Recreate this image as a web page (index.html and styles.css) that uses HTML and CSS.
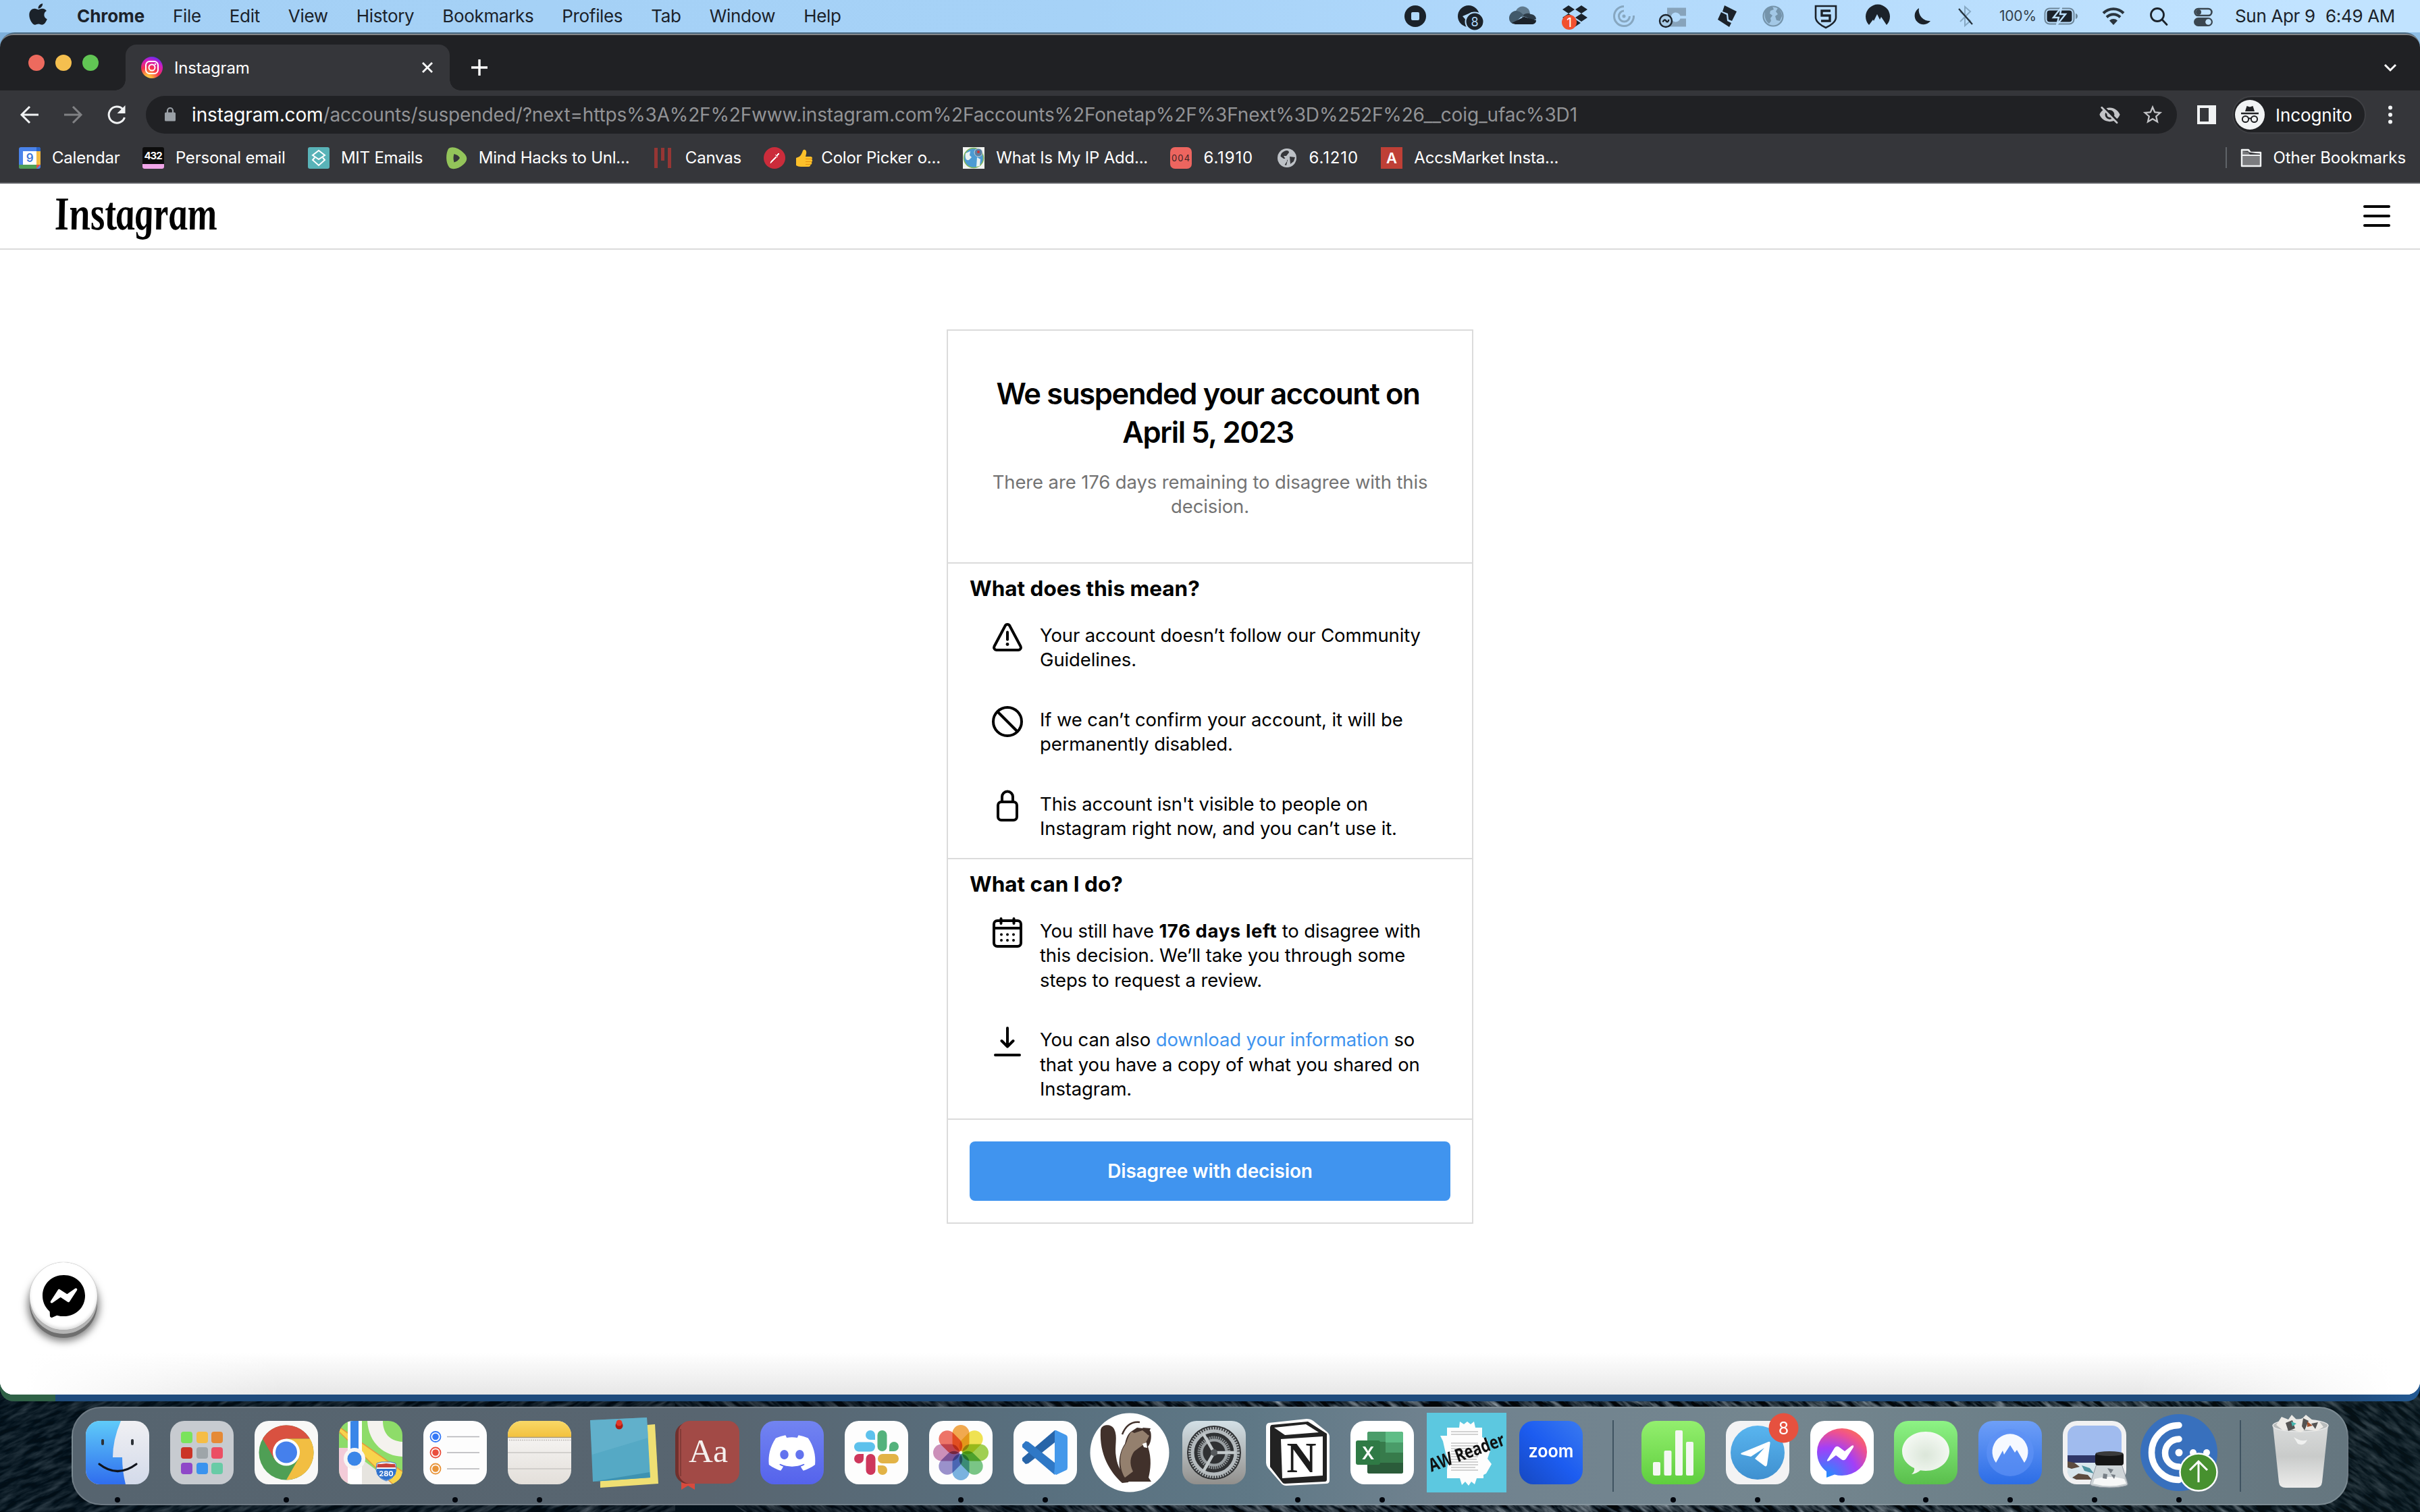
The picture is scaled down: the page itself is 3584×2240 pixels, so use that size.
FILE: index.html
```html
<!DOCTYPE html>
<html lang="en">
<head>
<meta charset="utf-8">
<title>Instagram</title>
<link rel="stylesheet" href="styles.css">
</head>
<body>
<div class="desktop">

  <svg class="wallpaper" width="3584" height="190" viewBox="0 0 3584 190" aria-hidden="true">
    <defs>
      <filter id="waves" x="0" y="0" width="100%" height="100%" color-interpolation-filters="sRGB">
        <feTurbulence type="fractalNoise" baseFrequency="0.03 0.14" numOctaves="4" seed="7"/>
        <feColorMatrix values="1.5 0.6 0 0 -0.88  1.5 0.6 0 0 -0.83  1.5 0.6 0 0 -0.79  0 0 0 0 1"/>
      </filter>
      <linearGradient id="shade"><stop offset="0" stop-color="#03131d" stop-opacity=".78"/><stop offset=".35" stop-color="#020c15" stop-opacity=".66"/><stop offset=".6" stop-color="#0a141c" stop-opacity=".3"/><stop offset=".88" stop-color="#0a181d" stop-opacity=".4"/><stop offset="1" stop-color="#07171e" stop-opacity=".8"/></linearGradient>
      <clipPath id="lh"><rect width="1000" height="190"/></clipPath><clipPath id="rh"><rect x="1000" width="2584" height="190"/></clipPath>
    </defs>
    <g clip-path="url(#lh)"><rect x="-300" y="-100" width="1500" height="900" transform="rotate(-24)" filter="url(#waves)"/></g>
    <g clip-path="url(#rh)"><rect x="900" y="-2200" width="2900" height="2300" transform="rotate(34 1000 0)" filter="url(#waves)"/></g>
    <rect width="3584" height="190" fill="url(#shade)"/>
  </svg>

  <header class="menubar">
    <nav class="menus">
      <svg class="apple" width="27" height="32" viewBox="0 30 384 452"><path fill="#1b222a" d="M318.7 268.7c-.2-36.7 16.4-64.4 50-84.8-18.8-26.9-47.2-41.7-84.7-44.6-35.5-2.8-74.3 20.7-88.5 20.7-15 0-49.4-19.7-76.4-19.7C63.3 141.2 4 184.8 4 273.5q0 39.3 14.4 81.2c12.8 36.7 59 126.7 107.2 125.2 25.2-.6 43-17.9 75.8-17.9 31.8 0 48.3 17.9 76.4 17.9 48.6-.7 90.4-82.5 102.6-119.3-65.2-30.7-61.7-90-61.7-91.9zm-56.6-164.2c27.3-32.4 24.8-61.9 24-72.5-24.1 1.4-52 16.4-67.9 34.9-17.5 19.8-27.8 44.3-25.6 71.9 26.1 2 49.9-11.4 69.5-34.3z"/></svg>
      <b>Chrome</b><span>File</span><span>Edit</span><span>View</span><span>History</span><span>Bookmarks</span><span>Profiles</span><span>Tab</span><span>Window</span><span>Help</span>
    </nav>
    <div class="status">
      <svg width="36" height="40" viewBox="0 0 36 40"><circle cx="18" cy="20" r="16" fill="#1b222a"/><rect x="12" y="14" width="12" height="12" rx="2" fill="#b2dafb"/></svg>
      <svg width="42" height="40" viewBox="0 0 42 40"><circle cx="16" cy="20" r="16" fill="#1b222a"/><path d="M7 20l14-6 3 1-10 6 1 8" fill="#b2dafb"/><circle cx="25" cy="28" r="13.500" fill="#1b222a" stroke="#b2dafb" stroke-width="2"/><text x="25" y="34.500" text-anchor="middle" font-size="18" fill="#b2dafb">8</text></svg>
      <svg width="40" height="40" viewBox="0 0 40 40"><path d="M10 12a11 11 0 0 1 21 4l-10 8z" fill="#60798c"/><path d="M8 31.500a8 8 0 0 1-8-8.500c0-6 5-11 10-11 4 0 8 2 11 6l-14 13z" fill="#42596a"/><path d="M20 19c4-4 9-4 12-2 5 0 8 4 8 7.500l-6 1z" fill="#2d3b47"/><path d="M4 30l18-9 18 5c0 4-3 6-7 6H9z" fill="#1b222a"/></svg>
      <svg width="40" height="40" viewBox="0 0 40 40"><path d="M10 4l9 6-9 6-9-6zM29 4l9 6-9 6-9-6zM10 16l9 6-9 6-9-6zM29 16l9 6-9 6-9-6zM19 24l9 6-9 6-9-6z" fill="#1b222a"/><circle cx="11" cy="29" r="11" fill="#f1502f"/><text x="11" y="36" text-anchor="middle" font-size="19" fill="#fff">1</text></svg>
      <svg width="36" height="40" viewBox="0 0 36 40"><g fill="none" stroke="#87a7c0" stroke-width="3"><path d="M18 5.500A14.500 14.500 0 1 0 32.500 19"/><path d="M18 12a8 8 0 1 0 8.500 8"/></g><circle cx="18" cy="20" r="2.500" fill="#87a7c0"/></svg>
      <svg width="44" height="40" viewBox="0 0 44 40"><path d="M10 7.500h28v12h-8.500a7 7 0 1 0 0 4H38v12H10z" fill="#87a3bb"/><circle cx="8" cy="27" r="9" fill="#a9cce8" stroke="#1b222a" stroke-width="2.400"/><path d="M3.500 28.500q2.500-5 5-1.500t4-2" fill="none" stroke="#1b222a" stroke-width="2.400"/></svg>
      <svg width="36" height="40" viewBox="0 0 36 40"><path d="M13 4l18 9-7 14-5-2-1-9-8-3z" fill="#1b222a"/><path d="M8 14l8 4 1 9 6 3-3 6L3 25z" fill="#1b222a"/></svg>
      <svg width="36" height="40" viewBox="0 0 36 40"><circle cx="18" cy="20" r="14.500" fill="#a3c8e6" stroke="#7594ab" stroke-width="2.200"/><path d="M7 10c3-3 6-5 10-4l2 4-5 2-1 4 4 3-3 4 1 4-3 4c-6-4-8-13-5-21zM25 8c4 3 6 8 6 12l-3 7-5-1-2-6 4-3-3-4z" fill="#7594ab"/></svg>
      <svg width="36" height="40" viewBox="0 0 36 40" fill="none" stroke="#1b222a" stroke-width="2.600"><path d="M3 5h30v17c0 6-8 12-15 15-7-3-15-9-15-15z"/><path d="M25 12H12v7h12v8H11" stroke-width="3.400"/></svg>
      <svg width="38" height="40" viewBox="0 0 38 40"><path d="M6 33A18 18 0 1 1 32 33L24 21l-2 4-4-8-5 10-1-2z" fill="#1b222a"/></svg>
      <svg width="34" height="40" viewBox="0 0 34 40"><path d="M13 8a13 13 0 1 0 17 19A16 16 0 0 1 13 8z" fill="#1b222a"/></svg>
      <svg width="30" height="40" viewBox="0 0 30 40" fill="none" stroke-width="2"><path d="M8 13l15 14-8 7V6l8 7L8 28" stroke="#87a9c4"/><path d="M6 9l20 23" stroke="#24303a" stroke-width="2.200"/></svg>
      <span class="pct">100%</span>
      <svg width="52" height="40" viewBox="0 0 52 40"><rect x="1.500" y="8.500" width="43" height="23" rx="7" fill="none" stroke="#6d8699" stroke-width="2"/><path d="M47 16c4 1 4 7 0 8z" fill="#6d8699"/><rect x="4.500" y="11.500" width="37" height="17" rx="4" fill="#1b222a"/><path d="M26 7L14 22h8l-3 11 13-16h-8z" fill="#1b222a" stroke="#bde0fd" stroke-width="2.400"/></svg>
      <svg width="36" height="40" viewBox="0 0 36 40" fill="none" stroke="#2a343d" stroke-width="4"><path d="M3 15.500a21 21 0 0 1 30 0M8 21.500a14 14 0 0 1 20 0"/><path d="M18 33l-6-6.500a8.500 8.500 0 0 1 12 0z" fill="#2a343d" stroke="none"/></svg>
      <svg width="36" height="40" viewBox="0 0 36 40" fill="none" stroke="#1b222a" stroke-width="2.800" stroke-linecap="round"><circle cx="16" cy="18" r="9.500"/><path d="M23 25l7 7.500"/></svg>
      <svg width="36" height="40" viewBox="0 0 36 40"><rect x="5.500" y="9" width="25" height="10" rx="5" fill="none" stroke="#3a4650" stroke-width="2.600"/><circle cx="11" cy="14" r="4" fill="#3a4650"/><rect x="4" y="22" width="28" height="13" rx="6.500" fill="#3a4650"/><circle cx="25.500" cy="28.500" r="4.300" fill="#c2e3fe"/></svg>
      <span>Sun Apr 9</span><span>6:49 AM</span>
    </div>
  </header>

  <main class="window">
    <div class="tabstrip">
      <div class="lights"><i class="red"></i><i class="yellow"></i><i class="green"></i></div>
      <div class="tab">
        <svg width="32" height="32" viewBox="0 0 32 32"><defs><radialGradient id="ig" cx=".3" cy="1.050" r="1.100"><stop offset="0" stop-color="#fd5"/><stop offset=".2" stop-color="#fdb03c"/><stop offset=".5" stop-color="#f5314e"/><stop offset=".8" stop-color="#d31cc0"/><stop offset="1" stop-color="#5b2ff2"/></radialGradient></defs><circle cx="16" cy="16" r="16" fill="url(#ig)"/><g fill="none" stroke="#fff" stroke-width="2"><rect x="7" y="7" width="18" height="18" rx="5.500"/><circle cx="16" cy="16" r="4.500"/></g><circle cx="21" cy="11" r="1.300" fill="#fff"/></svg>
        <span>Instagram</span>
        <svg width="18" height="18" viewBox="0 0 18 18"><path d="M2 2l14 14M16 2L2 16" stroke="#fff" stroke-width="2.800"/></svg>
      </div>
      <svg class="plus" width="26" height="26" viewBox="0 0 26 26"><path d="M13 1v24M1 13h24" stroke="#fff" stroke-width="3.400"/></svg>
      <svg class="chev" width="20" height="14" viewBox="0 0 20 14"><path d="M2 2l8 8 8-8" fill="none" stroke="#fff" stroke-width="3"/></svg>
    </div>

    <div class="toolbar">
      <svg width="28" height="28" viewBox="0 0 28 28" fill="none" stroke="#f1f3f4" stroke-width="3"><path d="M14 2L2 14l12 12M2.500 14H27"/></svg>
      <svg width="28" height="28" viewBox="0 0 28 28" fill="none" stroke="#808184" stroke-width="3"><path d="M14 2l12 12-12 12M25.500 14H1"/></svg>
      <svg width="30" height="30" viewBox="0 0 30 30"><path d="M24 7a12 12 0 1 0 2.500 12" fill="none" stroke="#f1f3f4" stroke-width="3"/><path d="M27.500 1v12H15.500z" fill="#f1f3f4"/></svg>
      <div class="omnibox">
        <svg width="18" height="24" viewBox="0 0 18 24"><rect x="1" y="8.500" width="16" height="13" rx="1.500" fill="#9aa0a6"/><path d="M5 9V6a4 4 0 0 1 8 0v3" fill="none" stroke="#9aa0a6" stroke-width="2.200"/></svg>
        <p class="url"><b>instagram.com</b>/accounts/suspended/?next=https%3A%2F%2Fwww.instagram.com%2Faccounts%2Fonetap%2F%3Fnext%3D%252F%26__coig_ufac%3D1</p>
        <svg width="33" height="33" viewBox="0 0 24 24" fill="#c3c4c7"><path d="M12 6.500c2.760 0 5 2.240 5 5 0 .51-.1 1-.24 1.460l3.060 3.060c1.390-1.230 2.490-2.770 3.180-4.530C21.270 7.110 17 4 12 4c-1.270 0-2.490.2-3.640.57l2.170 2.170c.47-.14.96-.24 1.470-.24zM2.710 3.160c-.39.39-.39 1.020 0 1.410l1.970 1.970C3.060 7.830 1.770 9.530 1 11.500 2.730 15.890 7 19 12 19c1.520 0 2.970-.3 4.310-.82l2.720 2.720c.39.39 1.020.39 1.410 0 .39-.39.39-1.020 0-1.410L4.130 3.160c-.39-.39-1.030-.39-1.420 0zM12 16.500c-2.760 0-5-2.240-5-5 0-.77.18-1.500.49-2.140l1.570 1.570c-.03.18-.06.37-.06.570 0 1.660 1.340 3 3 3 .2 0 .38-.03.57-.07L14.140 16c-.65.32-1.370.5-2.140.5z"/></svg>
        <svg width="34" height="34" viewBox="0 0 24 24" fill="#c3c4c7"><path d="M22 9.240l-7.190-.62L12 2 9.190 8.630 2 9.240l5.460 4.730L5.820 21 12 17.270 18.180 21l-1.630-7.030L22 9.240zM12 15.400l-3.760 2.270 1-4.280-3.320-2.880 4.380-.38L12 6.100l1.710 4.040 4.380.38-3.320 2.880 1 4.280L12 15.400z"/></svg>
      </div>
      <svg class="panel" width="28" height="28" viewBox="0 0 28 28"><path fill-rule="evenodd" d="M0 0h28v28H0zM4 4v20h13V4z" fill="#f1f3f4"/></svg>
      <div class="incognito">
        <svg width="44" height="44" viewBox="0 0 44 44"><circle cx="22" cy="22" r="22" fill="#f1f3f4"/><path d="M15 17l2.500-8 4.500 1.500L26.500 9l2.500 8z" fill="#202124"/><path d="M9 20h26" stroke="#202124" stroke-width="2.600"/><g fill="none" stroke="#202124" stroke-width="2"><circle cx="15.500" cy="28.500" r="4.600"/><circle cx="28.500" cy="28.500" r="4.600"/><path d="M20 28q2-1.500 4 0"/></g></svg>
        <span>Incognito</span>
      </div>
      <svg class="dots" width="8" height="28" viewBox="0 0 8 28" fill="#f1f3f4"><circle cx="4" cy="3.500" r="3"/><circle cx="4" cy="14" r="3"/><circle cx="4" cy="24.500" r="3"/></svg>
    </div>

    <div class="bookmarks">
      <a><svg width="32" height="32" viewBox="0 0 32 32"><rect width="32" height="32" rx="3" fill="#4a83ea"/><path d="M26 0h3a3 3 0 0 1 3 3v3h-6z" fill="#2a63c4"/><path d="M26 6h6v20h-6z" fill="#f3bb42"/><path d="M0 26h26v6H3a3 3 0 0 1-3-3z" fill="#4f9f55"/><path d="M26 26h6l-6 6z" fill="#dd5144"/><path d="M6 6h20v20H6z" fill="#fff"/><text x="16" y="22" text-anchor="middle" font-size="17" font-weight="600" fill="#3f76d8">9</text></svg>Calendar</a>
      <a><svg width="32" height="32" viewBox="0 0 32 32"><rect width="32" height="32" rx="3" fill="#0c0c0c"/><path d="M0 25h32v4a3 3 0 0 1-3 3H3a3 3 0 0 1-3-3z" fill="#f0a5e8"/><text x="16" y="18" text-anchor="middle" font-size="15" font-weight="700" fill="#fff" textLength="27">432</text></svg>Personal email</a>
      <a><svg width="32" height="32" viewBox="0 0 32 32"><rect width="32" height="32" rx="3" fill="#59b3b8"/><path d="M16 5l9 7-9 6-9-6zM10 15.500L7 19l9 8 9-8-3-3.500" fill="none" stroke="#fff" stroke-width="2"/></svg>MIT Emails</a>
      <a><svg width="32" height="32" viewBox="0 0 32 32"><path d="M4 2.500C9-2 19 1 26 8c7 6 7 12 0 18C18 33 9 34 5 29.500 0 22 0 10 4 2.500z" fill="#93c45a"/><path d="M12.500 10q7 2 8.500 6-3 5-8.500 6.500-2-6.500 0-12.500z" fill="#35363a"/></svg>Mind Hacks to Unl...</a>
      <a><svg width="32" height="32" viewBox="0 0 32 32" fill="#963634"><path d="M3 1h5v30H3zM13 1h5v19h-5zM23 1h5v30h-5z"/></svg>Canvas</a>
      <a><svg width="32" height="32" viewBox="0 0 32 32"><circle cx="16" cy="16" r="16" fill="#cb2c3b"/><path d="M10 24l1-3 7-7 1 1-7 7zM17 11l4 4M19 12l3-3 1 1-3 3z" fill="#fff" stroke="#fff" stroke-width="1"/></svg><svg class="thumb" width="26" height="28" viewBox="0 0 26 28"><path d="M1 14c1-1 4-1 6-3 3-3 3-7 5-9 3-1 5 2 4 6l-1 4h8c3 1 2 4 1 4 2 1 1 4 0 4 1 2 0 4-2 4 1 2-1 3-3 3H8c-3 0-5-1-7-2z" fill="#fcc02a"/><path d="M15 15.500h9M15 19.500h9M15 23.500h7" stroke="#e58f12" stroke-width="1.200"/></svg>Color Picker o...</a>
      <a><svg width="32" height="32" viewBox="0 0 32 32"><path d="M0 0h32v32H0z" fill="#f2f4f1"/><circle cx="16" cy="16" r="14.500" fill="#4c9bd2" stroke="#7fb356" stroke-width="1.500"/><path d="M4 9l7-3-1 6 3 3-4 4c-5 2-6-5-5-10zM21 15l5 3-1 10-5 1z" fill="#e9f2f2"/><circle cx="23" cy="8" r="6" fill="#5a7fa0" stroke="#c8d4dc"/><circle cx="23" cy="7" r="2" fill="#c33"/></svg>What Is My IP Add...</a>
      <a class="num"><svg width="32" height="32" viewBox="0 0 32 32"><rect width="32" height="32" rx="7" fill="#ed655f"/><text x="16" y="20.500" text-anchor="middle" font-size="13" fill="#3a2324" textLength="28">004</text></svg>6.1910</a>
      <a class="num"><svg width="32" height="32" viewBox="0 0 32 32"><circle cx="16" cy="16" r="14" fill="#bdc1c6"/><path d="M8 9c5-5 11-5 11-1l-4 5h-4l3 5 3 1-2 8C7 25 4 16 8 9zM20 14l8 1-2 6-5 4z" fill="#35363a"/><path d="M4 12l7 5h5v4l-4 6C5 24 3 17 4 12z" fill="#bdc1c6"/></svg>6.1210</a>
      <a><svg width="32" height="32" viewBox="0 0 32 32"><path d="M0 0h32v32H0z" fill="#bf4036"/><text x="16" y="24" text-anchor="middle" font-size="22" font-weight="600" fill="#fff">A</text></svg>AccsMarket Insta...</a>
      <a class="other"><svg width="32" height="28" viewBox="0 0 32 28"><path d="M2 26V2h10l3 4h15v20z" fill="#7b7c7f" stroke="#f1f3f4" stroke-width="2.400" stroke-linejoin="round"/><path d="M3 4h8l3 5h15v-1z" fill="#35363a"/><path d="M2 10h28" stroke="#f1f3f4" stroke-width="2"/></svg>Other Bookmarks</a>
    </div>

    <div class="page">
      <header class="site">
        <svg class="wordmark" width="250" height="76" viewBox="0 0 250 76"><text x="-3" y="56" transform="skewX(7)" textLength="241" lengthAdjust="spacingAndGlyphs">Instagram</text></svg>
        <svg width="40" height="32" viewBox="0 0 40 32" stroke="#000" stroke-width="4" stroke-linecap="round"><path d="M2 2h36M2 16h36M2 30h36"/></svg>
      </header>

      <article class="card">
        <section class="intro">
          <h1>We suspended your account on<br>April 5, 2023</h1>
          <p>There are 176 days remaining to disagree with this<br>decision.</p>
        </section>
        <section class="meaning">
          <h2>What does this mean?</h2>
          <div class="item"><svg width="48" height="48" viewBox="0 0 48 48"><path d="M21 6.500a3.700 3.700 0 0 1 6 0L43.600 37.800a3.700 3.700 0 0 1-3.300 5.200H7.700a3.700 3.700 0 0 1-3.300-5.200z" fill="none" stroke="#000" stroke-width="4" stroke-linejoin="round"/><path d="M24 16.500v11" stroke="#000" stroke-width="4" stroke-linecap="round"/><circle cx="24" cy="34.500" r="2.400"/></svg><p>Your account doesn’t follow our Community<br>Guidelines.</p></div>
          <div class="item"><svg width="48" height="48" viewBox="0 0 48 48" fill="none" stroke="#000" stroke-width="4"><circle cx="24" cy="24" r="21"/><path d="M9.500 9.500l29 29"/></svg><p>If we can’t confirm your account, it will be<br>permanently disabled.</p></div>
          <div class="item"><svg width="48" height="48" viewBox="0 0 48 48" fill="none" stroke="#000" stroke-width="4"><rect x="10" y="18" width="28" height="27" rx="5"/><path d="M16 18v-7.500a8 8 0 0 1 16 0V18"/></svg><p>This account isn't visible to people on<br>Instagram right now, and you can’t use it.</p></div>
        </section>
        <section class="actions">
          <h2>What can I do?</h2>
          <div class="item"><svg width="48" height="48" viewBox="0 0 48 48" fill="none" stroke="#000" stroke-width="4"><rect x="4" y="6" width="40" height="38" rx="5"/><path d="M4 17h40"/><path d="M14.500 3v7M33.500 3v7" stroke-linecap="round"/><path d="M15 26.500h.01M24 26.500h.01M33 26.500h.01M15 35h.01M24 35h.01M33 35h.01" stroke-linecap="round"/></svg><p>You still have <b>176 days left</b> to disagree with<br>this decision. We’ll take you through some<br>steps to request a review.</p></div>
          <div class="item"><svg width="48" height="48" viewBox="0 0 48 48" fill="none" stroke="#000" stroke-width="4" stroke-linecap="round" stroke-linejoin="round"><path d="M24 4v27M15.500 23l8.500 8.500 8.500-8.500M6 44h36"/></svg><p>You can also <a>download your information</a> so<br>that you have a copy of what you shared on<br>Instagram.</p></div>
        </section>
        <section class="foot"><button>Disagree with decision</button></section>
      </article>

      <div class="chat"><svg width="63" height="63" viewBox="0 0 24 24"><path d="M12 0C5.240 0 0 4.952 0 11.640c0 3.499 1.434 6.521 3.769 8.610a.96.96 0 0 1 .323.683l.065 2.135a.96.96 0 0 0 1.347.85l2.381-1.053a.96.96 0 0 1 .641-.046A13 13 0 0 0 12 23.280c6.760 0 12-4.952 12-11.640S18.760 0 12 0m6.806 7.440c.522-.03.971.567.63 1.094l-4.178 6.457a.707.707 0 0 1-.977.208l-3.870-2.504a.44.44 0 0 0-.49.007l-4.363 3.010c-.637.438-1.415-.317-.995-.966l4.179-6.457a.706.706 0 0 1 .977-.21l3.870 2.505c.15.097.344.094.491-.007l4.362-3.008a.7.7 0 0 1 .364-.13"/></svg></div>
      <div class="dockshade"></div>
    </div>
  </main>
  <div class="behind"></div>

  <footer class="dock">
    <svg class="defs" width="0" height="0"><defs>
      <linearGradient id="gFind" x2="0" y2="1"><stop stop-color="#5fcbf9"/><stop offset="1" stop-color="#2f6dee"/></linearGradient>
      <linearGradient id="gFace" x2="0" y2="1"><stop stop-color="#f0f0f3"/><stop offset="1" stop-color="#d3daea"/></linearGradient>
      <linearGradient id="gDisc" x2="0" y2="1"><stop stop-color="#7284f1"/><stop offset="1" stop-color="#5563ec"/></linearGradient>
      <linearGradient id="gGreen" x2="0" y2="1"><stop stop-color="#8df385"/><stop offset="1" stop-color="#5abf4c"/></linearGradient>
      <linearGradient id="gNum" x2="0" y2="1"><stop stop-color="#93ef6e"/><stop offset="1" stop-color="#5fce3e"/></linearGradient>
      <linearGradient id="gTele" x2="0" y2="1"><stop stop-color="#59b5ef"/><stop offset="1" stop-color="#3f90d0"/></linearGradient>
      <linearGradient id="gNord" x2="0" y2="1"><stop stop-color="#6e9ff8"/><stop offset="1" stop-color="#2c6de6"/></linearGradient>
      <linearGradient id="gZoom" x1="1" y1="0" x2="0" y2="1"><stop stop-color="#3a7af0"/><stop offset=".5" stop-color="#1c5cf0"/><stop offset="1" stop-color="#1648c0"/></linearGradient>
      <linearGradient id="gNote" x2="0" y2="1"><stop stop-color="#f8d867"/><stop offset="1" stop-color="#f3c13e"/></linearGradient>
      <linearGradient id="gPaper" x2="0" y2="1"><stop stop-color="#fbfaf9"/><stop offset="1" stop-color="#e3dfda"/></linearGradient>
      <linearGradient id="gSet" x2="0" y2="1"><stop stop-color="#d3e0e6"/><stop offset="1" stop-color="#918f8c"/></linearGradient>
      <radialGradient id="gMsgr" cx=".2" cy="1" r="1.100"><stop stop-color="#1e90ff"/><stop offset=".55" stop-color="#a23ff8"/><stop offset=".85" stop-color="#ee5190"/><stop offset="1" stop-color="#fa6a60"/></radialGradient>
      <radialGradient id="gBub" cx=".5" cy=".55" r=".6"><stop stop-color="#dbe6d9"/><stop offset="1" stop-color="#f7fbf6"/></radialGradient>
      <linearGradient id="gTrash" x2="0" y2="1"><stop stop-color="#d9dbdb"/><stop offset=".5" stop-color="#c9cbca"/><stop offset="1" stop-color="#ececeb"/></linearGradient>
      <clipPath id="sq"><rect width="94" height="94" rx="21"/></clipPath>
    </defs></svg>

    <div class="app on"><svg viewBox="0 0 94 94"><g clip-path="url(#sq)"><path d="M0 0h94v94H0z" fill="url(#gFace)"/><path d="M0 0h52Q40 28 40 54h14q0 20 5 40H0z" fill="url(#gFind)"/></g><g stroke="#2c3137" stroke-width="4" stroke-linecap="round" fill="none"><path d="M25 29v5M69 29v5"/><path d="M20 64q27 21 55 0" stroke="#10141c" stroke-width="3.200"/></g></svg></div>
    <div class="app"><svg viewBox="0 0 94 94"><rect width="94" height="94" rx="21" fill="#c7cbd0"/><g><rect x="16" y="16" width="17" height="17" rx="4" fill="#7ae35c"/><rect x="39" y="16" width="17" height="17" rx="4" fill="#f5bd45"/><rect x="61" y="16" width="17" height="17" rx="4" fill="#e58a36"/><rect x="16" y="39" width="17" height="17" rx="4" fill="#cb3426"/><rect x="39" y="39" width="17" height="17" rx="4" fill="#9ea5a9"/><rect x="61" y="39" width="17" height="17" rx="4" fill="#eb4f64"/><rect x="16" y="62" width="17" height="17" rx="4" fill="#8f48c8"/><rect x="39" y="62" width="17" height="17" rx="4" fill="#3a93ee"/><rect x="61" y="62" width="17" height="17" rx="4" fill="#68cba6"/></g></svg></div>
    <div class="app on"><svg viewBox="0 0 94 94"><rect width="94" height="94" rx="21" fill="#f8f8f7"/><circle cx="47" cy="47" r="40.500" fill="#4f9f55"/><path d="M12 26.500A40.500 40.500 0 0 1 82 26.500H47L29.500 57z" fill="#d95140"/><path d="M82 26.500A40.500 40.500 0 0 1 47 87.500L64.500 57 47 26.500z" fill="#f2be42"/><circle cx="47" cy="46.500" r="20" fill="#fff"/><circle cx="47" cy="46.500" r="16" fill="#4580ec"/></svg></div>
    <div class="app"><svg viewBox="0 0 94 94"><g clip-path="url(#sq)"><path d="M0 0h94v94H0z" fill="#8edc69"/><path d="M33 56l50 38H33z" fill="#e6e4df"/><path d="M0 40h14v54H0z" fill="#f3cbd8"/><path d="M42 0h23c0 18 10 30 29 31v22C68 52 44 34 42 0z" fill="#f4f2ee"/><path d="M-4 12L84 98h20V82L-4 6z" fill="#f8d44c" stroke="#e79a3a" stroke-width="1.500"/><path d="M33 36l61 58V82L33 38z" fill="#f8d44c"/><path d="M13 0h21v94H13z" fill="#fff"/><path d="M17 0h12v50H17z" fill="#3a86e8"/><circle cx="23" cy="56" r="16" fill="#f7f6f5"/><circle cx="23" cy="56" r="10.500" fill="#3a86e8"/></g><path d="M56 63q7-3 14-2 7-1 14 2 5 20-14 26-19-6-14-26z" fill="#fff" stroke="#3b79c9"/><path d="M57 64q6 0 13-1 7 1 13 1l1 5H56z" fill="#c8403a"/><path d="M56 71h28q2 12-14 17-16-5-14-17z" fill="#2f72cd"/><text x="70" y="82" text-anchor="middle" font-size="11" font-weight="700" fill="#fff">280</text></svg></div>
    <div class="app on"><svg viewBox="0 0 94 94"><rect width="94" height="94" rx="21" fill="#fdfdfd"/><path d="M35 23.500h48M35 47h48M35 71h48" stroke="#b3b3b7" stroke-width="1.600"/><g stroke-width="1.800" fill="#fff"><circle cx="18" cy="23.500" r="7.500" stroke="#3478f6"/><circle cx="18" cy="47" r="7.500" stroke="#ea4e3d"/><circle cx="18" cy="71" r="7.500" stroke="#e8943a"/></g><circle cx="18" cy="23.500" r="4.800" fill="#3478f6"/><circle cx="18" cy="47" r="4.800" fill="#ea4e3d"/><circle cx="18" cy="71" r="4.800" fill="#e8943a"/></svg></div>
    <div class="app on"><svg viewBox="0 0 94 94"><g clip-path="url(#sq)"><path d="M0 0h94v94H0z" fill="url(#gPaper)"/><path d="M0 0h94v24H0z" fill="url(#gNote)"/><path d="M0 24.500h94" stroke="#a89c80" stroke-width="1.500"/><path d="M2 28.500h92" stroke="#b5b1ac" stroke-width="1.600" stroke-dasharray="1.600 1.600"/><path d="M0 47h94M0 71h94" stroke="#c9c6c3" stroke-width="1.300"/></g></svg></div>
    <div class="app"><svg viewBox="0 0 94 94"><path d="M11 12l82-7 5 88-86 6z" fill="#efdf73"/><path d="M-3-1L81-5l5 89-85 6z" fill="#55a9c5"/><path d="M1 90l85-6-1-8z" fill="#3d92b1"/><path d="M-3-1L81-5l2 30L0 50z" fill="#69b6cf" opacity=".6"/><circle cx="40" cy="7" r="5.500" fill="#ad1c12"/><circle cx="40" cy="3" r="4.500" fill="#e2382a"/></svg></div>
    <div class="app"><svg viewBox="0 0 94 94"><path d="M8 88h20v14l-10-6-10 6z" fill="#d94a3d"/><rect x="-1" y="3" width="40" height="90" rx="18" fill="#71302d"/><rect x="4" width="90" height="93" rx="17" fill="#a24a46"/><path d="M7 12v70" stroke="#833b37" stroke-width="2"/><text x="48" y="61" text-anchor="middle" class="serif" font-size="49" fill="#f5efed" textLength="58" lengthAdjust="spacingAndGlyphs">Aa</text></svg></div>
    <div class="app"><svg viewBox="0 0 94 94"><rect width="94" height="94" rx="21" fill="url(#gDisc)"/><g transform="translate(12.500 13) scale(2.870)"><path fill="#fff" d="M20.317 4.370a19.791 19.791 0 00-4.885-1.515.074.074 0 00-.079.037c-.211.375-.445.865-.608 1.250-1.845-.276-3.680-.276-5.487 0-.164-.393-.406-.874-.618-1.250a.077.077 0 00-.079-.037 19.736 19.736 0 00-4.885 1.515.07.07 0 00-.032.028C.533 9.046-.319 13.580.099 18.058a.082.082 0 00.031.056c2.053 1.508 4.041 2.423 5.993 3.029a.078.078 0 00.084-.028c.462-.63.873-1.295 1.226-1.994a.076.076 0 00-.042-.106c-.653-.248-1.274-.55-1.872-.892a.077.077 0 01-.008-.128c.126-.094.252-.192.372-.291a.074.074 0 01.078-.011c3.928 1.793 8.180 1.793 12.061 0a.074.074 0 01.079.010c.12.099.246.198.373.292a.077.077 0 01-.007.128 12.299 12.299 0 01-1.873.891.077.077 0 00-.041.107c.36.698.772 1.363 1.225 1.993a.076.076 0 00.084.029c1.961-.607 3.950-1.522 6.002-3.029a.077.077 0 00.031-.055c.5-5.177-.838-9.674-3.549-13.660a.061.061 0 00-.031-.029zM8.020 15.331c-1.183 0-2.157-1.086-2.157-2.419 0-1.333.956-2.419 2.157-2.419 1.211 0 2.176 1.095 2.157 2.419 0 1.333-.956 2.419-2.157 2.419zm7.975 0c-1.183 0-2.157-1.086-2.157-2.419 0-1.333.955-2.419 2.157-2.419 1.211 0 2.176 1.095 2.157 2.419 0 1.333-.946 2.419-2.157 2.419Z"/></g></svg></div>
    <div class="app"><svg viewBox="0 0 94 94"><rect width="94" height="94" rx="21" fill="#fdfdfd"/><g stroke-width="14" stroke-linecap="round"><path d="M21 38.500h17" stroke="#5dc1ec"/><path d="M55.500 21v17" stroke="#54b27c"/><path d="M38.500 56v17" stroke="#ce375c"/><path d="M56 56h17" stroke="#e2b346"/></g><path d="M45 28h-7a7 7 0 1 1 7-7z" fill="#5dc1ec"/><path d="M66 45v-7a7 7 0 1 1 7 7z" fill="#54b27c"/><path d="M28 49v7a7 7 0 1 1-7-7z" fill="#ce375c"/><path d="M49 66h7a7 7 0 1 1-7 7z" fill="#e2b346"/></svg></div>
    <div class="app on"><svg viewBox="0 0 94 94"><rect width="94" height="94" rx="21" fill="#fdfdfd"/><g class="petals"><rect x="34.500" y="6" width="25" height="39" rx="12.500" fill="#f2a13c"/><rect x="34.500" y="6" width="25" height="39" rx="12.500" fill="#f0e13f" transform="rotate(45 47 47)"/><rect x="34.500" y="6" width="25" height="39" rx="12.500" fill="#97cc3f" transform="rotate(90 47 47)"/><rect x="34.500" y="6" width="25" height="39" rx="12.500" fill="#6cc17a" transform="rotate(135 47 47)"/><rect x="34.500" y="6" width="25" height="39" rx="12.500" fill="#6cacde" transform="rotate(180 47 47)"/><rect x="34.500" y="6" width="25" height="39" rx="12.500" fill="#9086c8" transform="rotate(225 47 47)"/><rect x="34.500" y="6" width="25" height="39" rx="12.500" fill="#c985b4" transform="rotate(270 47 47)"/><rect x="34.500" y="6" width="25" height="39" rx="12.500" fill="#ee6658" transform="rotate(315 47 47)"/></g></svg></div>
    <div class="app on"><svg viewBox="0 0 94 94"><rect width="94" height="94" rx="21" fill="#fdfdfd"/><path d="M61 14v18L22 63l-4 1-5-5v-4z" fill="#2764a8"/><path d="M61 80V62L22 31l-4-1-5 5v4z" fill="#2f78c6"/><path d="M61 14l2 0 15 7q2 1 2 4v44q0 3-2 4l-15 7-3-2 1-8z" fill="#4498ea"/></svg></div>
    <div class="app"><svg viewBox="0 0 94 94"><circle cx="47" cy="47" r="58.500" fill="#fff"/><path d="M4 14C5 4 20 4 24 12c6 12 0 25 3 42 2 14 8 24 20 33l-2 4-9 1C18 76 2 50 4 14z" fill="#41312b"/><path d="M52 14l6-4 16 2 4 4c2 8 0 18-4 22 6 18 4 34 1 46l4 6H40C28 72 30 48 40 34c2-8 4-16 12-20z" fill="#41312b"/><path d="M50 16c-6 6-6 14-10 20-10 14-8 36 0 48l12-9c-6-12-4-22 2-30 8-6 10-8 16-11l6-12-10-8-12 4z" fill="#94806e"/><path d="M66 10l12 1-4 10z" fill="#41312b"/><path d="M36 20Q44 0 62 2" fill="none" stroke="#41312b" stroke-width="2.500"/><path d="M66 34l6-2 1 8-5-1z" fill="#fff"/><path d="M42 20q-8 10-2 12" fill="none" stroke="#fff" stroke-width="2"/></svg></div>
    <div class="app"><svg viewBox="0 0 94 94"><rect width="94" height="94" rx="21" fill="url(#gSet)"/><circle cx="47" cy="47" r="40" fill="#2f3133"/><g fill="none"><circle cx="47" cy="47" r="36" stroke="#a9afb2" stroke-width="4" stroke-dasharray="2.200 1.600"/><circle cx="47" cy="47" r="32" stroke="#b4babd" stroke-width="5"/><circle cx="47" cy="47" r="22" stroke="#8d9396" stroke-width="5" stroke-dasharray="1.800 1.300"/><circle cx="47" cy="47" r="18.500" stroke="#999fa2" stroke-width="4"/><path d="M47 47h32M47 47L31 19M47 47L31 75" stroke="#c2c8ca" stroke-width="4.500"/></g><circle cx="47" cy="47" r="5" fill="#55595c"/></svg></div>
    <div class="app on"><svg viewBox="0 0 94 94"><path d="M4 3L60-3q6 0 10 3l20 16q4 3 4 8v64q0 5-5 5L30 96q-5 0-8-4L3 70q-3-4-3-8V9q0-5 4-6z" fill="#fff"/><path d="M8 6l54-5 28 18v68q0 3-3 3L28 93q-3 0-4-2L6 68V10q0-3 2-4z" fill="#222"/><path d="M12 10l47-5 19 12-50 4z" fill="#fff"/><path d="M22 27l62-4v58l-60 4z" fill="#fff"/><text x="52.500" y="76" text-anchor="middle" class="serif" font-weight="700" font-size="64" fill="#1c1c1c" textLength="44" lengthAdjust="spacingAndGlyphs">N</text></svg></div>
    <div class="app on"><svg viewBox="0 0 94 94"><rect width="94" height="94" rx="21" fill="#fff"/><rect x="25" y="16" width="53" height="62" rx="3" fill="#377b4b"/><path d="M25 31h27V16H28q-3 0-3 3z" fill="#4a9c69"/><path d="M52 16h23q3 0 3 3v13H52z" fill="#5fbd86"/><path d="M52 32h26v15H52z" fill="#4a9c69"/><path d="M25 62h53v13q0 3-3 3H28q-3 0-3-3z" fill="#2b5c3a"/><rect x="8" y="29" width="36" height="36" rx="3" fill="#2f7a45"/><text x="26" y="56.500" text-anchor="middle" font-size="26" font-weight="600" fill="#fff">X</text></svg></div>
    <div class="app"><svg viewBox="0 0 94 94"><path d="M-12-12h118v118H-12z" fill="#5cc8e0"/><path d="M30 10h6l1-9 6 4 5-4 5 4 5-4 2 9h10v14l8 4-2 8 6 8-4 12 6 8-8 14-4 2v5H62l-3 9-5-4-4 6-5-6-5 5-3-10H18V72l2-14-4-10-4-18-4-8 10 0v-12z" fill="#fdfdfd"/><path d="M24 16h40M24 20h40M24 33h40M24 37h40M24 41h38M24 45h40M24 49h40M24 53h40M24 57h38M24 61h40M24 65h40M24 69h36M24 73h40" stroke="#c4c4c4" stroke-width="1.300"/><text x="47" y="56" text-anchor="middle" class="sans" font-weight="700" font-size="27" fill="#111" transform="rotate(-20 47 47)" textLength="118" lengthAdjust="spacingAndGlyphs">AW Reader</text></svg></div>
    <div class="app"><svg viewBox="0 0 94 94"><rect width="94" height="94" rx="21" fill="url(#gZoom)"/><text x="47" y="54" text-anchor="middle" font-size="26" font-weight="600" fill="#fff" textLength="67" lengthAdjust="spacingAndGlyphs">zoom</text></svg></div>
    <i class="sep"></i>
    <div class="app on"><svg viewBox="0 0 94 94"><rect width="94" height="94" rx="21" fill="url(#gNum)"/><g fill="#f4f7f3"><rect x="17" y="61" width="11" height="20" rx="2"/><rect x="33.500" y="44" width="11" height="37" rx="2"/><rect x="50" y="14" width="11" height="67" rx="2"/><rect x="66" y="31" width="11" height="50" rx="2"/></g></svg></div>
    <div class="app on"><svg viewBox="0 0 94 94"><rect width="94" height="94" rx="21" fill="#f3f3f4"/><circle cx="47" cy="47" r="40" fill="url(#gTele)"/><path d="M23 47.500L63 31q3-1 2.500 2.500L61 65q-1 4-4 1.500L43 56l14-16-20 13-13-3q-3-1-1-2.500z" fill="#fff"/><circle cx="85.500" cy="10.500" r="22" fill="#e6513f"/><text x="85.500" y="19.500" text-anchor="middle" font-size="25" fill="#fff">8</text></svg></div>
    <div class="app on"><svg viewBox="0 0 94 94"><rect width="94" height="94" rx="21" fill="#fff"/><path d="M10 46a37 35 0 1 1 37 35q-6 0-11-1.500L24 84V75Q10 64 10 46z" fill="url(#gMsgr)"/><path d="M25 58l11-18q3-4 7-1l8 6 10-8q4-2 3 2L53 56q-3 4-7 1l-8-6-10 8q-4 2-3-1z" fill="#fff"/></svg></div>
    <div class="app on"><svg viewBox="0 0 94 94"><rect width="94" height="94" rx="21" fill="url(#gGreen)"/><path d="M47 16c20 0 35 13 35 29S67 74 47 74q-4 0-8-.8Q34 78 26 79q5-4 4-9C19 65 12 56 12 45c0-16 15-29 35-29z" fill="url(#gBub)"/></svg></div>
    <div class="app on"><svg viewBox="0 0 94 94"><rect width="94" height="94" rx="21" fill="url(#gNord)"/><circle cx="47" cy="47" r="35" fill="#5e92f5" opacity=".7"/><path d="M26 62a26.500 26.500 0 1 1 42 0L57 43l-3 4-7-11-9 14-2-6z" fill="#f6f9ff"/></svg></div>
    <div class="app on"><svg viewBox="0 0 94 94"><rect width="94" height="94" rx="21" fill="#f1f1f2"/><rect x="7" y="7" width="80" height="80" rx="14" fill="#a0bbee"/><path d="M7 51h80v14H7z" fill="#2f3768"/><path d="M7 62h80v11q0 14-14 14H21Q7 87 7 73z" fill="#d8e6ec"/><path d="M7 60l10 2 8 6-12 3-6-2zM14 84l9-6 14 2 6 7H20z" fill="#5d4c3f"/><path d="M28 66l12 4 6 8-14-4z" fill="#4d93a0"/><path d="M50 64h37l9 28q1 3-2 4-10 3-25 3t-26-3q-3-1-2-4z" fill="#cdd3d6" opacity=".92" stroke="#88909a"/><path d="M47 86q22-6 44 0l3 7q-25 7-49 0z" fill="#f7f8f8"/><path d="M66 70l9 2-4 6zM60 78l6 1-1 7-6-1zM71 79l7 1-2 6z" fill="#777f86"/><rect x="48" y="47" width="42" height="19" rx="4" fill="#151515"/><ellipse cx="69" cy="48.500" rx="20" ry="3.500" fill="#3a3a3a"/></svg></div>
    <div class="app on"><svg viewBox="0 0 94 94"><circle cx="47" cy="47" r="57" fill="#3870bd"/><g fill="none" stroke="#fff" stroke-width="9.500" stroke-linecap="round"><path d="M47 6.500a40.500 40.500 0 0 0 0 81"/><path d="M47 27a20.500 20.500 0 0 0 0 41"/></g><circle cx="47" cy="47" r="5.500" fill="#fff"/><circle cx="68" cy="47" r="5" fill="#fff"/><circle cx="88" cy="47" r="5" fill="#fff"/><circle cx="76" cy="76" r="27.500" fill="#47912f" stroke="#fff" stroke-width="2.500"/><path d="M76 91V61M63 73l13-13 13 13" fill="none" stroke="#fff" stroke-width="3"/></svg></div>
    <i class="sep wide"></i>
    <div class="app"><svg viewBox="0 0 94 94"><path d="M7 6h82l-9 85q-1 8-10 8H26q-9 0-10-8z" fill="url(#gTrash)"/><ellipse cx="48" cy="7" rx="41" ry="9" fill="#b9bcbc" stroke="#e8e9e9" stroke-width="1.500"/><path d="M12 6l8-12 10 4 5-7 8 8 8-3 5-5 10 8 10 2 6 8-10 6-16-2-8 4-12-4-14 1z" fill="#eceae6"/><path d="M26 3l10-4 4 12-10 4zM52-4l8 4-6 14-4-6zM64 4l10-2-4 10z" fill="#555453"/><path d="M34 1l8 3-6 4z" fill="#46b7b0"/><path d="M58 1l8 6-8 2z" fill="#a0532f"/><path d="M38 24q12 8 20 4-4 10-14 6z" fill="#f0f1f0"/></svg></div>
  </footer>
</div>
</body>
</html>
```
FILE: styles.css
```css
* { box-sizing: border-box; }
body { margin: 0; font-family: Inter, "Noto Sans", sans-serif; color: #000; }
svg { display: block; flex: none; overflow: visible; }
svg text { font-family: Inter, "Noto Sans", sans-serif; }
svg text.serif { font-family: "Liberation Serif", serif; }
svg text.sans { font-family: "Open Sans", "Noto Sans", sans-serif; }
h1, h2, p { margin: 0; }

.desktop { position: relative; width: 3584px; height: 2240px; overflow: hidden; display: flex; flex-direction: column; background: linear-gradient(90deg, #7fb0da, #8fbfe6) 0 0 / 100% 200px no-repeat, #07151f; }
.wallpaper { position: absolute; left: 0; bottom: 0; overflow: hidden; }

/* macOS menu bar */
.menubar { height: 48px; flex: none; display: flex; justify-content: space-between; background: linear-gradient(90deg, #a4d0f5 0, #a6d2f7 45%, #b0d8fb 63%, #c1e3ff 95%); font-size: 26px; letter-spacing: -.013em; color: #1b222a; white-space: nowrap; }
.menus { display: flex; align-items: center; gap: 42px; padding: 0 0 1px 43px; }
.menus .apple { margin: -5px 2px 0 0; }
.menus b { font-weight: 700; letter-spacing: -.003em; }
.status { width: 1506px; display: grid; align-items: center; grid-template-columns: 81px 76px 78px 74px 72px 82px 67px 78px 76px 67px 66px 66px 66px 85px 67px 66px 65px 134px 1fr; padding-bottom: 1px; }
.pct { font-size: 21px; letter-spacing: -.01em; color: #34404a; }

/* Chrome window */
.window { position: relative; z-index: 1; height: 2018px; flex: none; padding-top: 2px; border-radius: 22px 22px 20px 20px; overflow: hidden; display: flex; flex-direction: column; background: #47677f; color: #fff; }
.tabstrip { height: 84px; flex: none; display: flex; background: #202124; border-top: 2px solid #85888b; border-radius: 20px 20px 0 0; }
.lights { display: flex; gap: 16px; padding: 29px 0 0 42px; width: 186px; }
.lights i { width: 24px; height: 24px; border-radius: 50%; }
.red { background: #ed6a5e; }
.yellow { background: #f5bf4f; }
.green { background: #61c554; }
.tab { position: relative; width: 480px; height: 68px; margin-top: 14px; padding: 0 24px 0 23px; border-radius: 16px 16px 0 0; background: #35363a; display: flex; align-items: center; font-size: 24px; letter-spacing: -.006em; }
.tab::before, .tab::after { content: ""; position: absolute; bottom: 0; width: 16px; height: 16px; }
.tab::before { left: -16px; background: radial-gradient(circle at 0 0, #202124 15.5px, #35363a 16px); }
.tab::after { right: -16px; background: radial-gradient(circle at 100% 0, #202124 15.5px, #35363a 16px); }
.tab span { flex: 1; padding-left: 17px; }
.plus { margin: 35px 0 0 31px; }
.chev { margin: 42px 34px 0 auto; }

.toolbar { height: 72px; flex: none; padding: 0 40px 0 30px; display: flex; align-items: center; background: #35363a; }
.toolbar > svg { margin-right: 36px; }
.toolbar > svg:nth-child(3) { margin-right: 28px; }
.omnibox { width: 3008px; height: 56px; margin-right: 30px; padding: 0 19px 0 27px; border-radius: 28px; background: #202124; display: flex; align-items: center; }
.url { flex: 1; padding-left: 23px; font-size: 28px; letter-spacing: -.0055em; color: #929396; white-space: nowrap; }
.url b { font-weight: 400; color: #fff; }
.omnibox .url + svg { margin-right: 30px; }
.toolbar > .panel { margin-right: 24px; }
.incognito { width: 198px; height: 56px; margin-right: 32px; padding-left: 2px; border: 2px solid #3f4044; border-radius: 28px; background: #202124; display: flex; align-items: center; gap: 16px; font-size: 26px; letter-spacing: -.003em; }
.toolbar > .dots { margin: 0; }

.bookmarks { height: 66px; flex: none; padding: 12px 21px 0 28px; display: flex; align-items: flex-start; gap: 33.4px; background: #35363a; border-bottom: 2px solid #5b5c61; font-size: 24px; letter-spacing: -.009em; white-space: nowrap; }
.bookmarks a { height: 31px; display: flex; align-items: center; gap: 17px; }
.bookmarks .num { letter-spacing: .036em; }
.bookmarks .thumb { margin-right: -5px; margin-left: -2px; }
.bookmarks .other { margin-left: auto; padding-left: 20px; border-left: 2px solid #5f6368; letter-spacing: -.003em; }

/* Page */
.page { position: relative; flex: 1; background: #fff; color: #000; display: flex; flex-direction: column; align-items: center; }
.site { width: 100%; height: 98px; flex: none; padding: 0 44px 0 79px; border-bottom: 2px solid #dbdbdb; display: flex; align-items: center; justify-content: space-between; }
.wordmark { margin-top: 4px; }
.wordmark text { font: italic 700 70px "Liberation Serif", serif; }
.card { width: 780px; height: 1325px; margin-top: 118px; border: 2px solid #dbdbdb; display: flex; flex-direction: column; font-size: 27.5px; line-height: 36.4px; letter-spacing: -.0045em; }
.card section { flex: none; border-bottom: 2px solid #dbdbdb; }
.intro { height: 345px; padding-top: 65px; text-align: center; color: #737373; }
.intro h1 { margin: 0 6px 27px 0; font-size: 43.5px; line-height: 57px; font-weight: 600; letter-spacing: -.031em; color: #000; }
.meaning { height: 438px; }
.actions { height: 386px; }
h2 { padding: 18px 0 0 32px; font-size: 31.5px; line-height: 38px; font-weight: 700; letter-spacing: 0; }
.item { padding-left: 64px; display: flex; gap: 24px; }
h2 + .item { margin-top: 35px; }
.item svg { margin-top: -6px; }
.item p { margin: -3px 0 3px; }
.item + .item { margin-top: 52px; }
.item b { letter-spacing: .022em; }
.item a { color: #4094ef; }
.card .foot { border: 0; padding: 32px; }
.foot button { width: 712px; height: 88px; border: 0; border-radius: 8px; background: #4094ef; color: #fff; font: 600 28px Inter, sans-serif; letter-spacing: -.005em; display: flex; align-items: center; justify-content: center; padding-bottom: 2px; }
.chat { position: absolute; left: 44px; bottom: 96px; width: 100px; height: 100px; border-radius: 50%; background: #fff; display: flex; align-items: center; justify-content: center; box-shadow: 0 0 1px #777, inset 0 -3px 4px #ddd, 0 6px 0 #b4b4b4, 0 12px 0 #6f6f6f, 0 14px 12px 3px rgba(0,0,0,.5); }
.dockshade { position: absolute; inset: auto 0 0; height: 62px; background: linear-gradient(90deg, #fff 40px, transparent 420px, transparent calc(100% - 420px), #fff calc(100% - 40px)), linear-gradient(#fff, #e7e7e7); }
.behind { height: 30px; flex: none; margin-top: -20px; border-radius: 0 0 20px 20px; background: linear-gradient(90deg, #2f6146 82px, #1f4b7c 82px, #1f4b7c 97%, #235a94); position: relative; }

/* Dock */
.dock { position: relative; z-index: 2; width: 3372px; height: 146px; flex: none; margin: 8px 0 0 106px; padding: 19px 0 0 4px; border: 2px solid rgba(255,255,255,.14); border-radius: 44px; display: flex; background: linear-gradient(90deg, #56646f 0, #586570 28%, #586f7e 42%, #5f7886 52%, #70828f 60%, #74868f 75%, #6a7d86 88%, #65767f 100%); }
.dock .defs { position: absolute; }
.app { width: 124.87px; flex: none; display: flex; flex-direction: column; align-items: center; gap: 19px; }
.app svg { width: 94px; height: 94px; }
.app.on::after { content: ""; width: 8px; height: 8px; border-radius: 50%; background: #02060d; }
.petals rect { mix-blend-mode: multiply; opacity: .9; }
.sep { width: 2px; height: 106px; flex: none; margin: -1px 25px 0 29px; background: #3f5361; }
.sep.wide { margin: -1px 24px 0 28px; }
```
